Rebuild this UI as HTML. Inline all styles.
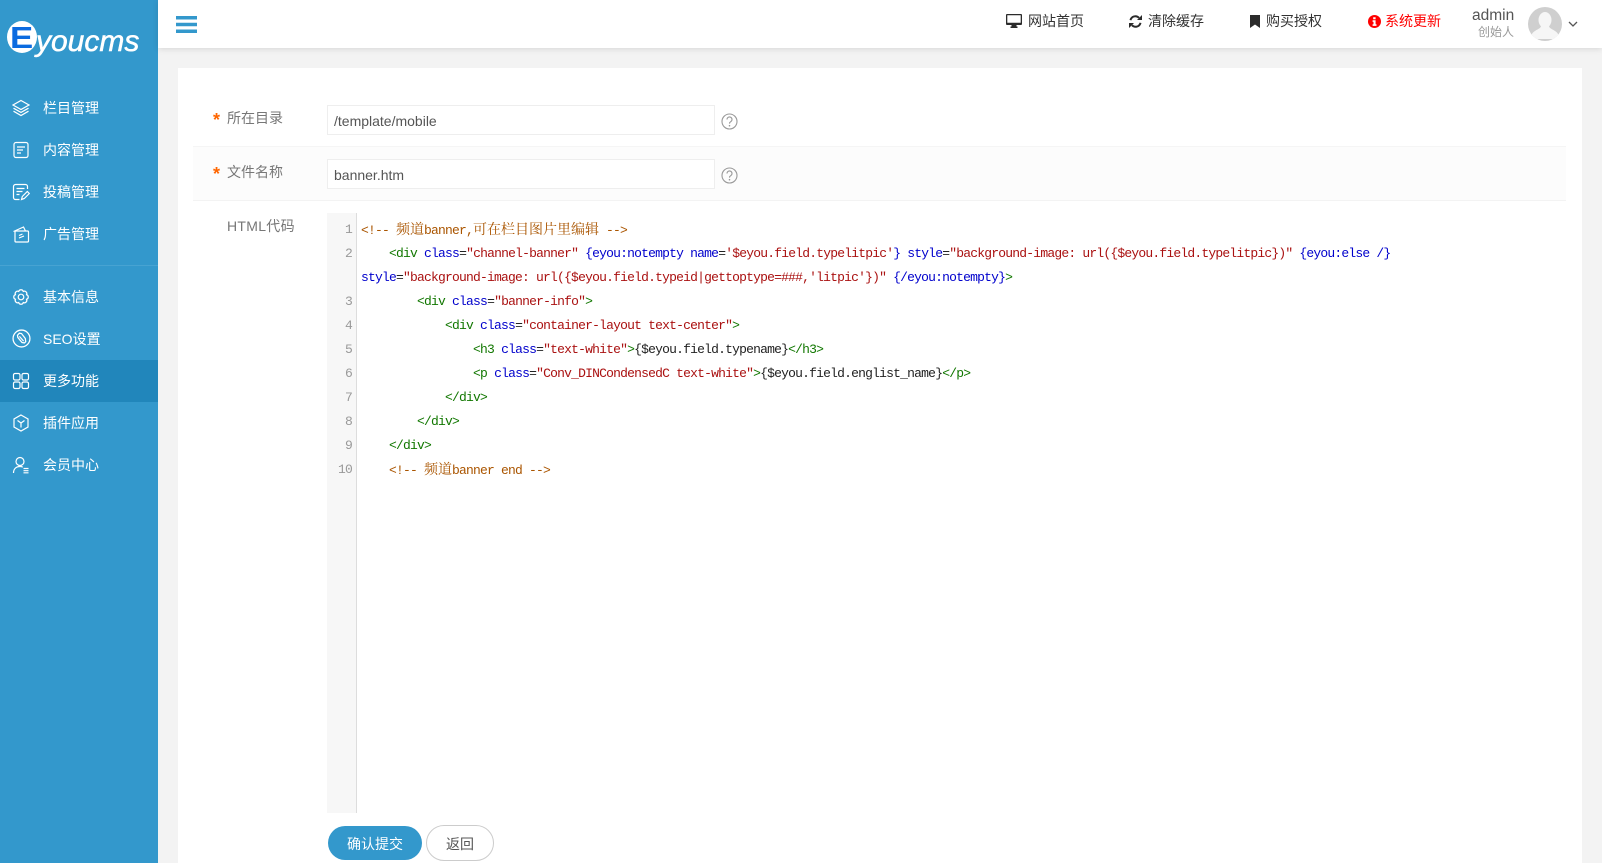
<!DOCTYPE html>
<html lang="zh-CN">
<head>
<meta charset="utf-8">
<title>eyoucms</title>
<style>
*{box-sizing:border-box;margin:0;padding:0}
html,body{width:1602px;height:863px;overflow:hidden;background:#f3f3f3;font-family:"Liberation Sans","Noto Sans CJK SC",sans-serif;font-size:14px}
.side{position:absolute;left:0;top:0;width:158px;height:863px;background:#3398cc;color:#fff}
.logo-c{position:absolute;left:7px;top:21px;width:30px;height:32px;border-radius:50%;background:#fff}
.logo-e{position:absolute;left:10px;top:22px;font:bold 31px/32px "Liberation Sans",sans-serif;color:#0b6be0;transform:scaleX(1.12);transform-origin:left center}
.logo-t{position:absolute;left:36px;top:26px;font:italic 400 30px/32px "Liberation Sans",sans-serif;color:#fff;-webkit-text-stroke:.5px #fff}
.sep{position:absolute;left:0;top:265px;width:158px;height:1px;background:#47a3d2}
.active{position:absolute;left:0;top:360px;width:158px;height:42px;background:#2186bb}
.m{position:absolute;left:43px;height:20px;line-height:20px;font-size:14px;color:#fff;white-space:nowrap}
.ic{position:absolute;left:12px;width:18px;height:18px;fill:none;stroke:#fff;stroke-width:1.2}
.head{position:absolute;left:158px;top:0;width:1444px;height:48px;background:#fff;box-shadow:0 1px 6px rgba(0,0,0,.12)}
.t{position:absolute;top:11px;line-height:20px;font-size:14px;color:#333;white-space:nowrap}
.card{position:absolute;left:178px;top:68px;width:1404px;height:795px;background:#fff}
.row2{position:absolute;left:193px;top:146px;width:1373px;height:55px;background:#fcfcfc;border-top:1px solid #f5f5f5;border-bottom:1px solid #f3f3f3}
.lab{position:absolute;left:227px;line-height:20px;color:#777;font-size:14px;white-space:nowrap}
.star{position:absolute;left:213px;color:#f60;font-size:18px;line-height:20px;font-weight:bold}
.inp{position:absolute;left:327px;width:388px;height:30px;border:1px solid #eee;background:#fff;color:#555;font-size:14px;line-height:30px;padding-left:6px;white-space:nowrap}
.gut{position:absolute;left:327px;top:213px;width:30px;height:600px;background:#f7f7f7;border-right:1px solid #ddd}
.n{position:absolute;width:25px;left:327px;text-align:right;height:24px;line-height:24px;color:#999;font-family:"Liberation Mono",monospace;font-size:13px;letter-spacing:-.8px}
.c{position:absolute;left:361px;height:24px;line-height:24px;font-family:"Liberation Mono",monospace;font-size:13px;letter-spacing:-.8px;white-space:pre;color:#222}
.c i{font-style:normal;font-family:"Noto Serif CJK SC",serif;font-size:14px;letter-spacing:0}
.g{color:#170}.b{color:#00c}.r{color:#a11}.o{color:#a50}
.btn{position:absolute;border-radius:18px;text-align:center;font-size:14px;white-space:nowrap}
</style>
</head>
<body>

<div class="side">
  <div class="logo-c"></div>
  <div class="logo-e">E</div>
  <div class="logo-t">youcms</div>
  <div class="sep"></div>
  <div class="active"></div>

  <svg class="ic" style="top:99px" viewBox="0 0 18 18"><path d="M9 1.500 17 6l-8 4.500L1 6zM1.500 9.200 9 13.400l7.500-4.200M1.500 12.200 9 16.500l7.500-4.300"/></svg>
  <div class="m" style="top:98px">栏目管理</div>

  <svg class="ic" style="top:141px" viewBox="0 0 18 18"><rect x="2" y="1.500" width="14" height="15" rx="2"/><path d="M5 6h8M5 9h6M5 12h4"/></svg>
  <div class="m" style="top:140px">内容管理</div>

  <svg class="ic" style="top:183px" viewBox="0 0 18 18"><path d="M15.500 6V3.500a2 2 0 0 0-2-2h-10a2 2 0 0 0-2 2v11a2 2 0 0 0 2 2h4M4.500 5.500h8M4.500 8.500h6M4.500 11.500h3M9.500 16.500l.8-3 5-5 2 2-5 5z"/></svg>
  <div class="m" style="top:182px">投稿管理</div>

  <svg class="ic" style="top:225px" viewBox="0 0 18 18"><rect x="3" y="6" width="13.500" height="11" rx="1"/><path d="M1.500 6.500l10-4.500 2 4M7 13l5-2M7 10.500l3.500-1.500"/></svg>
  <div class="m" style="top:224px">广告管理</div>

  <svg class="ic" style="top:288px" viewBox="0 0 18 18"><circle cx="9" cy="9" r="2.800"/><path d="M14.540 6.700A2.400 2.400 0 0 1 14.540 11.300A2.400 2.400 0 0 1 11.300 14.540A2.400 2.400 0 0 1 6.700 14.540A2.400 2.400 0 0 1 3.460 11.300A2.400 2.400 0 0 1 3.460 6.700A2.400 2.400 0 0 1 6.700 3.460A2.400 2.400 0 0 1 11.300 3.460A2.400 2.400 0 0 1 14.540 6.700z"/></svg>
  <div class="m" style="top:287px">基本信息</div>

  <svg class="ic" style="left:12px;top:329px;width:19px;height:19px" viewBox="0 0 18 18"><circle cx="9" cy="9" r="8"/><path d="M6 5l1-1 2 .3L12.600 9l.4 3-1.200 1.200-2.300-.4L5.500 8 5.200 6zM7 7l4 4.500"/></svg>
  <div class="m" style="top:329px">SEO设置</div>

  <svg class="ic" style="top:372px" viewBox="0 0 18 18"><rect x="1.500" y="1.500" width="6.500" height="6.500" rx="1.500"/><rect x="10" y="1.500" width="6.500" height="6.500" rx="1.500"/><rect x="1.500" y="10" width="6.500" height="6.500" rx="1.500"/><rect x="10" y="10" width="6.500" height="6.500" rx="1.500"/></svg>
  <div class="m" style="top:371px">更多功能</div>

  <svg class="ic" style="top:414px" viewBox="0 0 18 18"><path d="M9 1l7 4v8l-7 4-7-4V5zM5.500 6.500 9 9l3.500-2.500M9 9v4.500"/></svg>
  <div class="m" style="top:413px">插件应用</div>

  <svg class="ic" style="top:456px" viewBox="0 0 18 18"><circle cx="8" cy="5.500" r="4"/><path d="M1.500 17c0-4 2.500-6.500 6.500-6.500 1 0 2 .2 2.800.6M11.500 12.500h5M11.500 14.700h5M11.500 16.800h5"/></svg>
  <div class="m" style="top:455px">会员中心</div>
</div>

<div class="head"></div>
<svg style="position:absolute;left:176px;top:16px" width="21" height="17" viewBox="0 0 21 17"><path d="M0 0h21v3.500H0zM0 6.800h21v3.400H0zM0 13.500h21V17H0z" fill="#3398cc"/></svg>

<svg style="position:absolute;left:1006px;top:14px" width="16" height="14" viewBox="0 0 16 14"><path fill-rule="evenodd" d="M1 0h14a1 1 0 0 1 1 1v9a1 1 0 0 1-1 1h-4.500v1.500h1V14h-7v-1.500h1V11H1a1 1 0 0 1-1-1V1a1 1 0 0 1 1-1zm.3 1.300v7.400h13.400V1.300z" fill="#2b2b2b"/></svg>
<div class="t" style="left:1028px">网站首页</div>

<svg style="position:absolute;left:1129px;top:15px" width="13" height="13" viewBox="0 0 13 13"><path d="M1.500 5.200A5 5 0 0 1 10 2.800M11.500 7.800A5 5 0 0 1 3 10.200" fill="none" stroke="#2b2b2b" stroke-width="2"/><path d="M13 0v5H8zM0 13V8h5z" fill="#2b2b2b"/></svg>
<div class="t" style="left:1148px">清除缓存</div>

<svg style="position:absolute;left:1250px;top:15px" width="10" height="13" viewBox="0 0 10 13"><path d="M0 0h10v13L5 9.500 0 13z" fill="#2b2b2b"/></svg>
<div class="t" style="left:1266px">购买授权</div>

<svg style="position:absolute;left:1368px;top:15px" width="13" height="13" viewBox="0 0 13 13"><circle cx="6.500" cy="6.500" r="6.500" fill="#f00"/><path d="M5.200 2.200h2.400v2H5.200zM4.600 5.300h3v4h.9v1.600H4.600V9.300h.9V6.900h-.9z" fill="#fff"/></svg>
<div class="t" style="left:1385px;color:#f00">系统更新</div>

<div class="t" style="left:1472px;top:6px;font-size:15.500px;color:#555">admin</div>
<div class="t" style="left:1478px;top:22px;font-size:12px;color:#999">创始人</div>

<svg style="position:absolute;left:1528px;top:7px" width="34" height="34" viewBox="0 0 34 34"><defs><clipPath id="av"><circle cx="17" cy="17" r="17"/></clipPath></defs><circle cx="17" cy="17" r="17" fill="#cfcfcf"/><g clip-path="url(#av)" fill="#f6f6f6"><ellipse cx="17" cy="13" rx="6.500" ry="8"/><path d="M13 19c0 3-7 4-9 8-1 2 0 5 0 5h26s1-3 0-5c-2-4-9-5-9-8z"/></g></svg>
<svg style="position:absolute;left:1568px;top:21px" width="10" height="7" viewBox="0 0 10 7"><path d="M1 1l4 4 4-4" fill="none" stroke="#555" stroke-width="1.300"/></svg>

<div class="card"></div>
<div class="row2"></div>

<div class="star" style="top:110px">*</div>
<div class="lab" style="top:108px">所在目录</div>
<div class="inp" style="top:105px">/template/mobile</div>
<svg style="position:absolute;left:721px;top:113px" width="17" height="17" viewBox="0 0 17 17"><circle cx="8.500" cy="8.500" r="7.500" fill="none" stroke="#999" stroke-width="1.100"/><path d="M6 6.500a2.500 2.500 0 1 1 3.800 2.100c-.9.600-1.300 1-1.300 2" fill="none" stroke="#999" stroke-width="1.100"/><circle cx="8.500" cy="12.700" r=".8" fill="#999"/></svg>

<div class="star" style="top:164px">*</div>
<div class="lab" style="top:162px">文件名称</div>
<div class="inp" style="top:159px">banner.htm</div>
<svg style="position:absolute;left:721px;top:167px" width="17" height="17" viewBox="0 0 17 17"><circle cx="8.500" cy="8.500" r="7.500" fill="none" stroke="#999" stroke-width="1.100"/><path d="M6 6.500a2.500 2.500 0 1 1 3.800 2.100c-.9.600-1.300 1-1.300 2" fill="none" stroke="#999" stroke-width="1.100"/><circle cx="8.500" cy="12.700" r=".8" fill="#999"/></svg>

<div class="lab" style="top:216px;letter-spacing:.3px">HTML代码</div>

<div class="gut"></div>
<div class="n" style="top:218px">1</div>
<div class="n" style="top:242px">2</div>
<div class="n" style="top:290px">3</div>
<div class="n" style="top:314px">4</div>
<div class="n" style="top:338px">5</div>
<div class="n" style="top:362px">6</div>
<div class="n" style="top:386px">7</div>
<div class="n" style="top:410px">8</div>
<div class="n" style="top:434px">9</div>
<div class="n" style="top:458px">10</div>

<div class="c o" style="top:217px">&lt;!-- <i>频道</i>banner,<i>可在栏目图片里编辑</i> --&gt;</div>
<div class="c" style="top:242px">    <span class="g">&lt;div</span> <span class="b">class</span>=<span class="r">"channel-banner"</span> <span class="b">{eyou:notempty</span> <span class="b">name</span>=<span class="r">'$eyou.field.typelitpic'</span><span class="b">}</span> <span class="b">style</span>=<span class="r">"background-image: url({$eyou.field.typelitpic})"</span> <span class="b">{eyou:else /}</span></div>
<div class="c" style="top:266px"><span class="b">style</span>=<span class="r">"background-image: url({$eyou.field.typeid|gettoptype=###,'litpic'})"</span> <span class="b">{/eyou:notempty}</span><span class="g">&gt;</span></div>
<div class="c" style="top:290px">        <span class="g">&lt;div</span> <span class="b">class</span>=<span class="r">"banner-info"</span><span class="g">&gt;</span></div>
<div class="c" style="top:314px">            <span class="g">&lt;div</span> <span class="b">class</span>=<span class="r">"container-layout text-center"</span><span class="g">&gt;</span></div>
<div class="c" style="top:338px">                <span class="g">&lt;h3</span> <span class="b">class</span>=<span class="r">"text-white"</span><span class="g">&gt;</span>{$eyou.field.typename}<span class="g">&lt;/h3&gt;</span></div>
<div class="c" style="top:362px">                <span class="g">&lt;p</span> <span class="b">class</span>=<span class="r">"Conv_DINCondensedC text-white"</span><span class="g">&gt;</span>{$eyou.field.englist_name}<span class="g">&lt;/p&gt;</span></div>
<div class="c g" style="top:386px">            &lt;/div&gt;</div>
<div class="c g" style="top:410px">        &lt;/div&gt;</div>
<div class="c g" style="top:434px">    &lt;/div&gt;</div>
<div class="c o" style="top:457px">    &lt;!-- <i>频道</i>banner end --&gt;</div>

<div class="btn" style="left:328px;top:826px;width:94px;height:34px;line-height:36px;background:#3398cc;color:#fff">确认提交</div>
<div class="btn" style="left:426px;top:825px;width:68px;height:36px;line-height:36px;background:#fff;border:1px solid #ccc;color:#555">返回</div>

</body>
</html>
